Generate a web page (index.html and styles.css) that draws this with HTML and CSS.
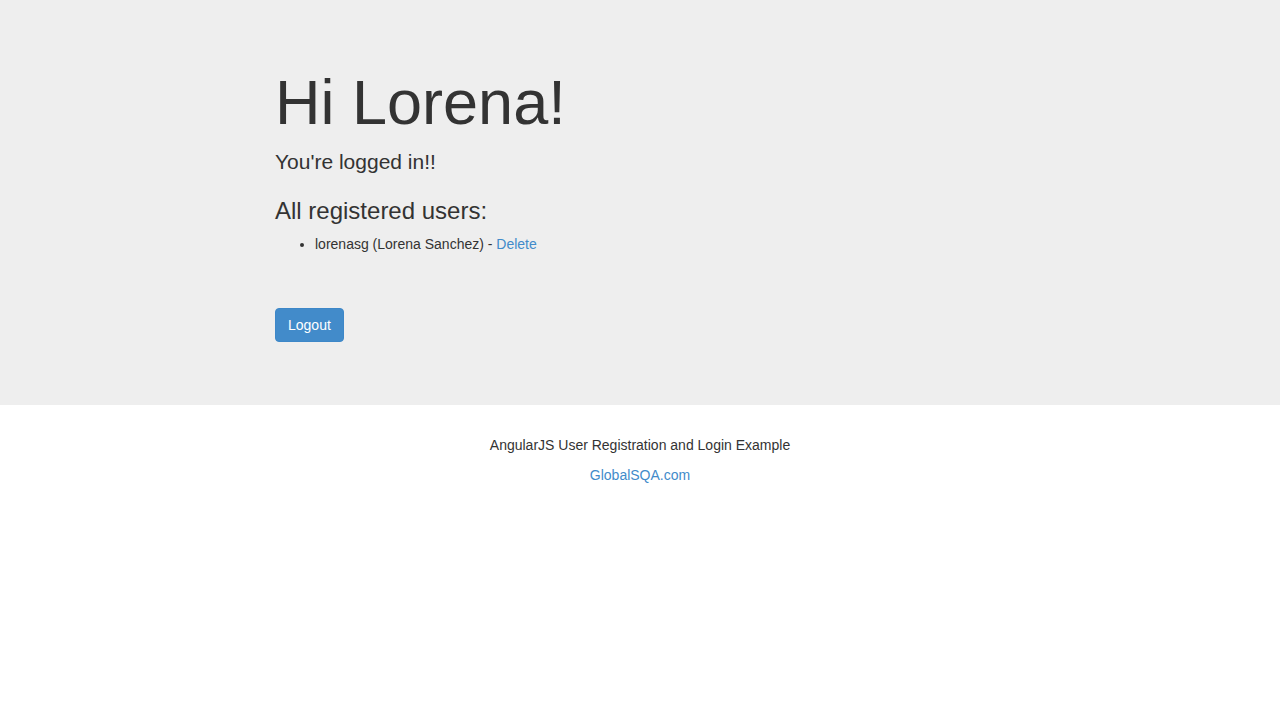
FILE: index.html
```html
<!DOCTYPE html>
<html>
<head>
<meta charset="utf-8">
<title>AngularJS User Registration and Login Example</title>
<link rel="stylesheet" href="styles.css">
</head>
<body>
<div class="jumbotron">
  <div class="container">
    <h1 class="title">Hi Lorena!</h1>
    <p class="lead">You're logged in!!</p>
    <h3 class="subtitle">All registered users:</h3>
    <ul class="users">
      <li>lorenasg (Lorena Sanchez) - <a href="#" class="link">Delete</a></li>
    </ul>
    <p class="lead spacer">&nbsp;</p>
    <div class="actions"><a href="#" class="btn">Logout</a></div>
  </div>
</div>
<div class="credits">
  <p class="credit-line">AngularJS User Registration and Login Example</p>
  <p class="credit-line"><a href="#" class="link">GlobalSQA.com</a></p>
</div>
</body>
</html>
```
FILE: styles.css
```css
html, body {
  margin: 0;
  padding: 0;
}
body {
  font-family: "Liberation Sans", Arial, Helvetica, sans-serif;
  font-size: 14px;
  line-height: 1.42857143;
  color: #333333;
  background: #ffffff;
}
.jumbotron {
  background: #eeeeee;
  padding: 48px 0;
  margin-bottom: 30px;
}
.container {
  width: 730px;
  margin: 0 auto;
}
.title {
  font-size: 63px;
  font-weight: 500;
  line-height: 1.1;
  margin: 20px 0 10px;
}
.lead {
  font-size: 21px;
  font-weight: 200;
  line-height: 1.42857143;
  margin: 0 0 15px;
}
.subtitle {
  font-size: 24px;
  font-weight: 500;
  line-height: 1.1;
  margin: 21px 0 9px;
}
.users {
  margin: 0 0 10px;
  padding-left: 40px;
}
.spacer {
  margin-bottom: 14px;
}
.link {
  color: #428bca;
  text-decoration: none;
}
.actions {
  margin: 0 0 15px;
  height: 34px;
}
.btn {
  display: inline-block;
  box-sizing: border-box;
  height: 34px;
  padding: 6px 12px;
  font-size: 14px;
  line-height: 20px;
  color: #ffffff;
  background: #428bca;
  border: 1px solid #3d87c8;
  border-radius: 4px;
  text-decoration: none;
}
.credits {
  text-align: center;
}
.credit-line {
  margin: 0 0 10px;
}
```
